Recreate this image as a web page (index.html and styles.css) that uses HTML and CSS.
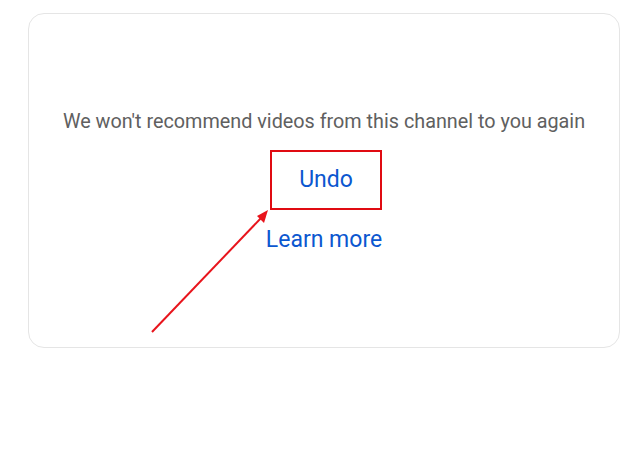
FILE: index.html
```html
<!DOCTYPE html>
<html lang="en">
<head>
    <meta charset="UTF-8">
    <title>Channel hidden</title>
    <link rel="stylesheet" href="styles.css">
</head>
<body>
    <div class="card">
        <p class="message">We won't recommend videos from this channel to you again</p>
        <div class="undo-box">
            <a class="link" href="#">Undo</a>
        </div>
        <a class="link learn" href="#">Learn more</a>
    </div>

    <!-- annotation arrow pointing at the Undo box -->
    <svg class="arrow" width="640" height="457" viewBox="0 0 640 457">
        <line x1="152" y1="332" x2="262" y2="217" stroke="#e8141c" stroke-width="2"/>
        <polygon points="268,210 257,216 264,223" fill="#e8141c"/>
    </svg>
</body>
</html>
```

FILE: styles.css
```css
body {
    margin: 0;
    font-family: Roboto, "Liberation Sans", sans-serif;
    background: #fff;
    width: 640px;
    height: 457px;
    position: relative;
    overflow: hidden;
}
.card {
    margin: 13px 0 0 28px;
    width: 592px;
    height: 335px;
    border: 1px solid #e5e5e5;
    border-radius: 16px;
    box-sizing: border-box;
    display: flex;
    flex-direction: column;
    align-items: center;
    padding-top: 95px;
}
.message {
    margin: 0;
    font-size: 19.8px;
    line-height: 26px;
    color: #606060;
}
.undo-box {
    margin: 15px 0 0 4px;
    width: 112px;
    height: 60px;
    box-sizing: border-box;
    border: 2px solid #e00b12;
    display: flex;
    align-items: center;
    justify-content: center;
}
.link {
    color: #0b57d0;
    text-decoration: none;
    font-size: 23px;
    line-height: 30px;
}
.learn {
    margin-top: 15px;
}
.arrow {
    position: absolute;
    left: 0;
    top: 0;
}
```
